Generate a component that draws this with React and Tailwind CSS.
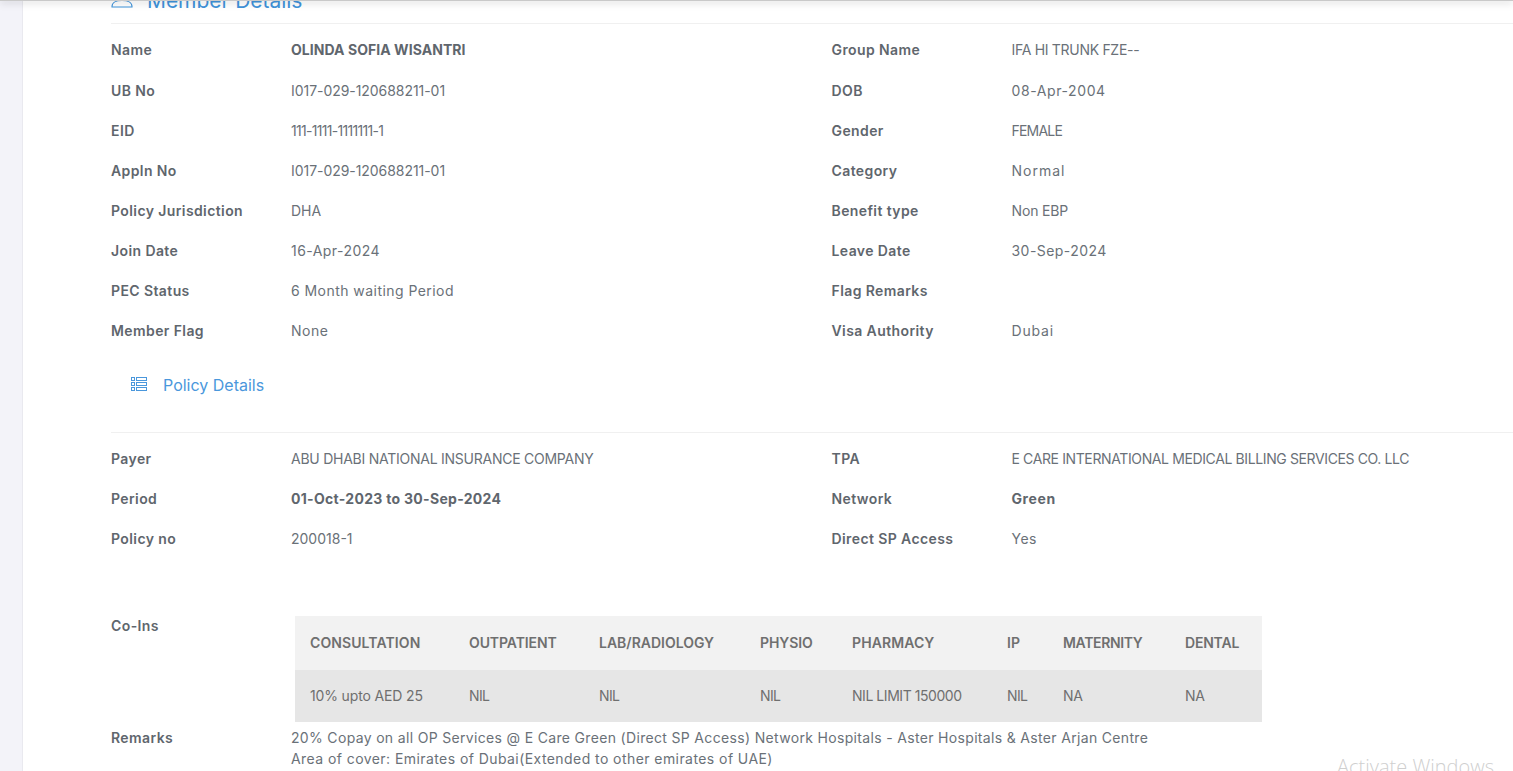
import React from 'react';

// value text is tracked per row, the fallback font is narrower/wider than the original in different places
const memberRows = [
  ['Name', 'OLINDA SOFIA WISANTRI', 'tracking-[0.05px]', 'Group Name', 'IFA HI TRUNK FZE--', 'tracking-[-0.3px]', true],
  ['UB No', 'I017-029-120688211-01', 'tracking-[-0.05px]', 'DOB', '08-Apr-2004', 'tracking-[0.6px]'],
  ['EID', '111-1111-1111111-1', 'tracking-[-0.7px]', 'Gender', 'FEMALE', 'tracking-[-0.8px]'],
  ['Appln No', 'I017-029-120688211-01', 'tracking-[-0.05px]', 'Category', 'Normal', 'tracking-[1px]'],
  ['Policy Jurisdiction', 'DHA', 'tracking-[0px]', 'Benefit type', 'Non EBP', 'tracking-[-0.15px]'],
  ['Join Date', '16-Apr-2024', 'tracking-[0.45px]', 'Leave Date', '30-Sep-2024', 'tracking-[0.45px]'],
  ['PEC Status', '6 Month waiting Period', 'tracking-[0.45px]', 'Flag Remarks', '', ''],
  ['Member Flag', 'None', 'tracking-[0.5px]', 'Visa Authority', 'Dubai', 'tracking-[0.8px]'],
];

const policyRows = [
  ['Payer', 'ABU DHABI NATIONAL INSURANCE COMPANY', 'tracking-[-0.25px]', 'TPA', 'E CARE INTERNATIONAL MEDICAL BILLING SERVICES CO. LLC', 'tracking-[-0.38px]'],
  ['Period', '01-Oct-2023 to 30-Sep-2024', 'tracking-[0.3px]', 'Network', 'Green', 'tracking-[0.6px]', true],
  ['Policy no', '200018-1', 'tracking-[0px]', 'Direct SP Access', 'Yes', 'tracking-[0.5px]'],
];

const coIns = [
  ['CONSULTATION', '10% upto AED 25', 'w-[159px] tracking-[0.1px]', 'tracking-[-0.15px]'],
  ['OUTPATIENT', 'NIL', 'w-[130px] tracking-[-0.1px]', 'tracking-[-0.6px]'],
  ['LAB/RADIOLOGY', 'NIL', 'w-[161px]', 'tracking-[-0.6px]'],
  ['PHYSIO', 'NIL', 'w-[92px] tracking-[-0.1px]', 'tracking-[-0.6px]'],
  ['PHARMACY', 'NIL LIMIT 150000', 'w-[155px] tracking-[0.1px]', 'tracking-[-0.45px]'],
  ['IP', 'NIL', 'w-[56px]', 'tracking-[-0.6px]'],
  ['MATERNITY', 'NA', 'w-[122px] tracking-[-0.35px]', 'tracking-[-0.4px]'],
  ['DENTAL', 'NA', 'w-[92px] tracking-[-0.2px]', 'tracking-[-0.4px]'],
];

const Field = ({ label, value, track, bold }) => (
  <div className="flex w-[720.5px] shrink-0">
    <div className="w-[180px] font-semibold tracking-[0.4px] text-[#5f666d]">{label}</div>
    <div className={`${track} ${bold ? 'font-bold text-[#5f666d]' : 'text-[#6a7178]'}`}>{value}</div>
  </div>
);

const App = () => {
  return (
    <div className="relative h-[771px] w-[1513px] overflow-hidden bg-white text-[14px] leading-[20px] font-['Inter','Noto_Sans',sans-serif]">
      <div className="pointer-events-none absolute inset-x-0 top-0 z-10 h-[1px] bg-[#c9c9c9] shadow-[0_1px_7px_rgba(0,0,0,0.5)]"></div>
      <div className="flex h-full">
        <div className="w-[23px] shrink-0 border-r border-[#e9e9ef] bg-[#f3f3f9]"></div>
        <div className="flex-1 pl-[88px]">
          <div className="-mt-[8px] flex h-[32px] items-start gap-[14px] border-b border-[#f0f0f0] text-[#3f93da]">
            <svg width="22" height="22" viewBox="0 0 22 22" fill="none" stroke="currentColor" strokeWidth="1.1" className="-mt-[1px]">
              <circle cx="11" cy="3" r="5" />
              <path d="M1 15.5c0-4 4.5-6 10-6s10 2 10 6v.5H1z" />
            </svg>
            <span className="-mt-[3px] text-[21px] leading-[24px] tracking-[-0.05px]">Member Details</span>
          </div>

          <div className="pt-[16px]">
            {memberRows.map((row, i) => (
              <div key={row[0]} className={`flex ${i === 0 ? 'h-[41px]' : 'h-[40px]'}`}>
                <Field label={row[0]} value={row[1]} track={row[2]} bold={row[6]} />
                <Field label={row[3]} value={row[4]} track={row[5]} />
              </div>
            ))}
          </div>

          <div className="mt-[8px] flex h-[64px] items-start gap-[16px] border-b border-[#f0f0f0] pl-[20px] pt-[5px] text-[#4a97dc]">
            <svg width="16" height="16" viewBox="0 0 16 16" fill="none" stroke="currentColor" strokeWidth="1" className="mt-[3px]">
              <rect x="0.5" y="0.5" width="3" height="3" />
              <rect x="5.5" y="0.5" width="10" height="3" />
              <rect x="0.5" y="5.5" width="3" height="3" />
              <rect x="5.5" y="5.5" width="10" height="3" />
              <rect x="0.5" y="10.5" width="3" height="3" />
              <rect x="5.5" y="10.5" width="10" height="3" />
            </svg>
            <span className="text-[16px] leading-[22px]">Policy Details</span>
          </div>

          <div className="pt-[16px]">
            {policyRows.map((row) => (
              <div key={row[0]} className="flex h-[40px]">
                <Field label={row[0]} value={row[1]} track={row[2]} bold={row[6]} />
                <Field label={row[3]} value={row[4]} track={row[5]} bold={row[6]} />
              </div>
            ))}
          </div>

          <div className="mt-[47px] flex">
            <div className="w-[184px] font-semibold tracking-[0.4px] text-[#5f666d]">Co-Ins</div>
            <table className="w-[967px] table-fixed border-collapse text-[#6f6f6f]">
              <thead>
                <tr className="h-[54px] bg-[#f2f2f2]">
                  {coIns.map((c) => (
                    <th key={c[0]} className={`${c[2]} pb-[1px] pl-[15px] text-left font-semibold`}>{c[0]}</th>
                  ))}
                </tr>
              </thead>
              <tbody>
                <tr className="h-[52px] bg-[#e6e6e6]">
                  {coIns.map((c) => (
                    <td key={c[0]} className={`${c[3]} pl-[15px]`}>{c[1]}</td>
                  ))}
                </tr>
              </tbody>
            </table>
          </div>

          <div className="mt-[5px] flex leading-[21px]">
            <div className="w-[180px] font-semibold tracking-[0.4px] text-[#5f666d]">Remarks</div>
            <div className="text-[#6a7178]">
              <div className="tracking-[0.33px]">20% Copay on all OP Services @ E Care Green (Direct SP Access) Network Hospitals - Aster Hospitals &amp; Aster Arjan Centre</div>
              <div className="tracking-[0.43px]">Area of cover: Emirates of Dubai(Extended to other emirates of UAE)</div>
            </div>
          </div>
        </div>
      </div>
      <div className="absolute left-[1337px] top-[755px] text-[20px] leading-[24px] font-light text-[#cfcfcf] font-['Open_Sans',sans-serif]">Activate Windows</div>
    </div>
  );
};

export default App;
